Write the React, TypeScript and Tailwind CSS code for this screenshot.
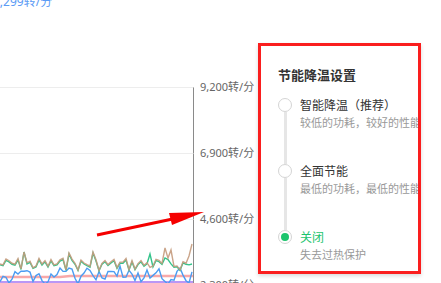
import React from "react";

// deterministic noise for the chart series
function makeRand(seed: number) {
  let s = seed;
  return () => {
    s = (s * 9301 + 49297) % 233280;
    return s / 233280;
  };
}

function series(seed: number, base: number, amp: number, spikes: Record<number, number> = {}) {
  const r = makeRand(seed);
  const pts: string[] = [];
  for (let i = 0; i <= 64; i++) {
    const x = i * 3;
    let y = base + (r() - 0.5) * amp;
    if (spikes[i] !== undefined) y = spikes[i];
    pts.push(`${x},${y.toFixed(1)}`);
  }
  return pts.join(" ");
}

const brown = series(7, 44, 13, { 8: 32, 23: 33, 31: 32, 55: 28, 57: 30, 63: 36, 64: 24 });
const green = series(7, 45, 12, { 8: 32, 23: 34, 31: 33, 50: 34, 55: 38, 64: 44 });
const blue = series(19, 55, 14, { 3: 63, 15: 64, 26: 64, 40: 46, 49: 50, 56: 64, 60: 48, 63: 63 });

const levels = ["9,200转/分", "6,900转/分", "4,600转/分", "2,300转/分"];

const options = [
  { title: "智能降温（推荐）", desc: "较低的功耗，较好的性能" },
  { title: "全面节能", desc: "最低的功耗，最低的性能" },
  { title: "关闭", desc: "失去过热保护", active: true },
];

const Chart = () => {
  return (
    <div className="w-[258px] shrink-0 flex flex-col">
      <div className="h-[87px] shrink-0">
        <div className="-mt-[5px] -ml-[7px] text-[12px] leading-[14px] text-[#5b9bf5]">1,299转/分</div>
      </div>
      {levels.map((label, i) => (
        <div key={label} className="flex h-[66px] shrink-0">
          <div className="w-[194px] shrink-0 border-t border-[#ededed] border-r border-r-[#8a8a8a]">
            {i === 2 && (
              <svg width="193" height="65" viewBox="0 0 193 65" className="block">
                <polyline points="0,62 193,62" fill="none" stroke="#a374f2" strokeWidth="1.5" />
                <polyline points="0,57 60,57 70,56 193,56" fill="none" stroke="#f8a9a9" strokeWidth="2.5" />
                <polyline points={blue} fill="none" stroke="#4b9cf2" strokeWidth="1.4" />
                <polyline points={green} fill="none" stroke="#34c48b" strokeWidth="1.4" />
                <polyline points={brown} fill="none" stroke="#c49a7c" strokeWidth="1.4" opacity="0.9" />
              </svg>
            )}
          </div>
          <div className="pl-[6px] -mt-[7px] text-[11px] leading-[14px] text-[#666] whitespace-nowrap">{label}</div>
        </div>
      ))}
    </div>
  );
};

const Panel = () => {
  return (
    <div className="mt-[43px] h-[231px] w-[163px] shrink-0 border-[3px] border-[#fa1e1e] bg-white shadow-[0_2px_4px_rgba(0,0,0,0.15)] overflow-hidden">
      <div className="pt-[20px] pl-[17px]">
        <div className="text-[13px] leading-[18px] font-bold text-[#333]">节能降温设置</div>
        <div className="mt-[14px] flex flex-col">
          {options.map((o, i) => (
            <div key={o.title} className={`flex ${i < options.length - 1 ? "h-[66px]" : ""}`}>
              <div className="w-[14px] shrink-0 flex flex-col items-center">
                <div className="w-[14px] h-[14px] rounded-full border border-[#d4d4d4] bg-white flex items-center justify-center shrink-0">
                  {o.active && <div className="w-[8px] h-[8px] rounded-full bg-[#1cc46d]" />}
                </div>
                {i < options.length - 1 && <div className="w-[3px] flex-1 bg-[#e6e6e6]" />}
              </div>
              <div className="pl-[8px] whitespace-nowrap">
                <div className={`text-[12px] leading-[16px] ${o.active ? "text-[#1cc46d]" : "text-[#333]"}`}>{o.title}</div>
                <div className="mt-[2px] text-[11px] leading-[14px] text-[#999]">{o.desc}</div>
              </div>
            </div>
          ))}
        </div>
      </div>
    </div>
  );
};

export default function App() {
  return (
    <div
      className="relative w-[441px] h-[283px] overflow-hidden bg-white flex"
      style={{ fontFamily: '"Noto Sans", "Noto Sans CJK SC", sans-serif' }}
    >
      <Chart />
      <Panel />
      {/* annotation arrow */}
      <svg className="absolute left-0 top-0 pointer-events-none" width="441" height="283">
        <line x1="97" y1="235" x2="175" y2="218.5" stroke="#f50000" strokeWidth="3" />
        <polygon points="169,213 204,212 172,225" fill="#f50000" />
      </svg>
    </div>
  );
}
